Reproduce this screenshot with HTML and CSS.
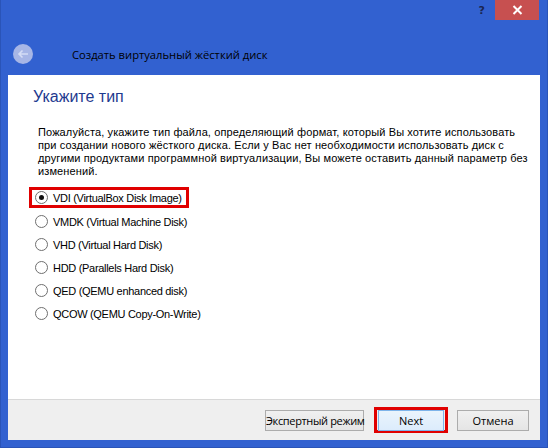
FILE: index.html
```html
<!DOCTYPE html>
<html lang="ru">
<head>
<meta charset="utf-8">
<link rel="stylesheet" href="styles.css">
</head>
<body>
<div class="window">
  <div class="titlebar">
    <span class="help">?</span>
    <span class="close">
      <svg width="11" height="10" viewBox="0 0 11 10"><path d="M1.5 1 L9.5 9 M9.5 1 L1.5 9" stroke="#fff" stroke-width="2"/></svg>
    </span>
  </div>
  <div class="header">
    <span class="back">
      <svg width="20" height="20" viewBox="0 0 20 20"><circle cx="10" cy="10" r="10" fill="#a7b6e6"/><path d="M15 10 H6 M9.5 6.5 L6 10 L9.5 13.5" stroke="#d5ddf5" stroke-width="1.6" fill="none"/></svg>
    </span>
    <span class="title">Создать виртуальный жёсткий диск</span>
  </div>
  <div class="panel">
    <div class="page">
      <h1 class="heading">Укажите тип</h1>
      <p class="desc">Пожалуйста, укажите тип файла, определяющий формат, который Вы хотите использовать при создании нового жёсткого диска. Если у Вас нет необходимости использовать диск с другими продуктами программной виртуализации, Вы можете оставить данный параметр без изменений.</p>
      <div class="options">
        <label class="option highlighted"><span class="radio checked"></span>VDI (VirtualBox Disk Image)</label>
        <label class="option"><span class="radio"></span>VMDK (Virtual Machine Disk)</label>
        <label class="option"><span class="radio"></span>VHD (Virtual Hard Disk)</label>
        <label class="option"><span class="radio"></span>HDD (Parallels Hard Disk)</label>
        <label class="option"><span class="radio"></span>QED (QEMU enhanced disk)</label>
        <label class="option"><span class="radio"></span>QCOW (QEMU Copy-On-Write)</label>
      </div>
    </div>
    <div class="footer">
      <button class="btn expert">Экспертный режим</button>
      <span class="next-frame"><button class="btn next">Next</button></span>
      <button class="btn cancel">Отмена</button>
    </div>
  </div>
</div>
</body>
</html>
```

FILE: styles.css
```css
html, body {
  margin: 0;
  padding: 0;
}
body {
  width: 548px;
  height: 448px;
  background: #3261d0;
  overflow: hidden;
}
.window {
  box-sizing: border-box;
  width: 548px;
  height: 448px;
  display: flex;
  flex-direction: column;
  border-left: 1px solid #2a54b8;
  border-right: 1px solid #2a54b8;
  border-bottom: 1px solid #2a54b8;
  padding: 0 7px 7px 7px;
}
.titlebar {
  height: 20px;
  display: flex;
  justify-content: flex-end;
  align-items: flex-start;
}
.help {
  font-family: "DejaVu Sans", sans-serif;
  font-weight: bold;
  font-size: 11px;
  color: #1a2550;
  margin-top: 4px;
  margin-right: 10px;
}
.close {
  width: 44px;
  height: 20px;
  background: #c75050;
  display: flex;
  align-items: center;
  justify-content: center;
  margin-right: 1px;
}
.header {
  height: 55px;
  display: flex;
  align-items: center;
  padding-top: 13px;
  box-sizing: border-box;
}
.back {
  width: 20px;
  height: 20px;
  margin-left: 5px;
  display: flex;
}
.title {
  font-family: "Open Sans", sans-serif;
  font-size: 11.2px;
  color: #000;
  margin-left: 39px;
}
.panel {
  flex: 1;
  background: #fff;
  display: flex;
  flex-direction: column;
}
.page {
  flex: 1;
  padding: 12px 0 0 21px;
}
.heading {
  margin: 0 0 0 4px;
  font-family: "Liberation Sans", sans-serif;
  font-weight: normal;
  font-size: 16px;
  color: #1e3a8f;
  line-height: 20px;
}
.desc {
  margin: 19px 0 0 9px;
  width: 490px;
  font-family: "Liberation Sans", sans-serif;
  font-size: 11px;
  letter-spacing: 0.12px;
  line-height: 13px;
  color: #000;
}
.options {
  margin-top: 9px;
  display: flex;
  flex-direction: column;
}
.option {
  display: flex;
  align-items: center;
  height: 23px;
  font-family: "Liberation Sans", sans-serif;
  font-size: 11px;
  letter-spacing: -0.3px;
  color: #000;
  width: fit-content;
  padding: 0 4px 0 3px;
  box-sizing: border-box;
  border: 3px solid transparent;
}
.option.highlighted {
  border-color: #e00000;
  height: 21px;
  margin-bottom: 2px;
}
.radio {
  width: 11px;
  height: 11px;
  border: 1px solid #6f6f6f;
  border-radius: 50%;
  background: #fff;
  margin-right: 5px;
  position: relative;
  flex: none;
}
.radio.checked::after {
  content: "";
  position: absolute;
  left: 3px;
  top: 3px;
  width: 5px;
  height: 5px;
  border-radius: 50%;
  background: #111;
}
.footer {
  height: 41px;
  box-sizing: border-box;
  border-top: 1px solid #d8d8d8;
  background: #efefef;
  display: flex;
  align-items: center;
  justify-content: flex-end;
  padding-right: 11px;
}
.btn {
  font-family: "Open Sans", sans-serif;
  font-size: 11px;
  color: #000;
  height: 21px;
  padding: 0;
  border: 1px solid #acacac;
  background: linear-gradient(#f0f0f0, #e5e5e5);
  box-sizing: border-box;
  white-space: nowrap;
}
.expert {
  width: 99px;
  letter-spacing: -0.35px;
}
.next-frame {
  display: flex;
  border: 3px solid #e00000;
  padding: 0 1px;
  margin: 0 9px 0 10px;
  height: 26px;
  box-sizing: border-box;
  align-items: center;
}
.next {
  width: 66px;
  background: linear-gradient(#eaf4fc, #dcecfc);
  border-color: #7eb4ea;
}
.cancel {
  width: 72px;
}
```
